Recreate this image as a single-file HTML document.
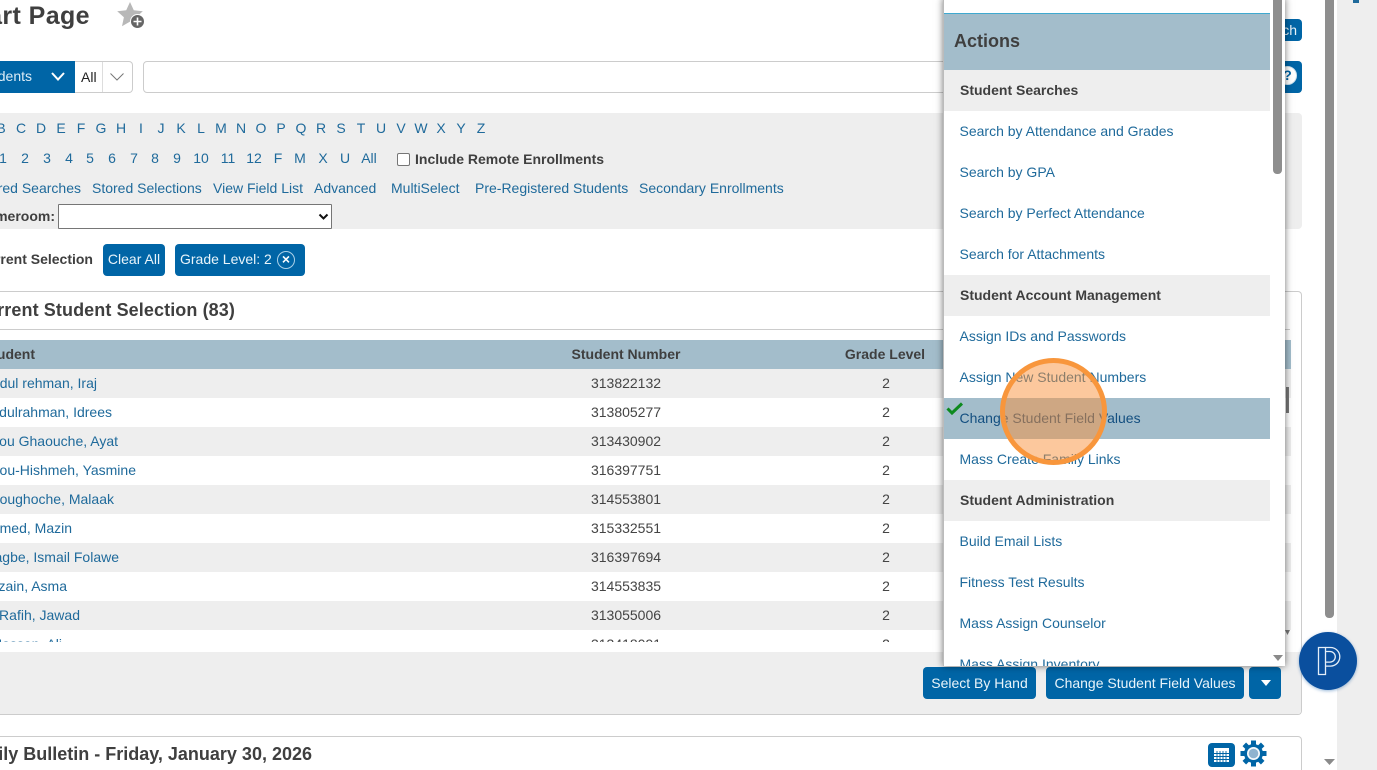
<!DOCTYPE html>
<html><head><meta charset="utf-8"><style>
html,body{margin:0;padding:0;background:#fff;width:1377px;height:770px;overflow:hidden}
body{position:relative;font-family:"Liberation Sans",sans-serif;font-size:14px;color:#1f6a9b}
.a{position:absolute;white-space:nowrap}
.t{position:absolute;white-space:nowrap;line-height:20px}
.c{position:absolute;white-space:nowrap;line-height:20px;text-align:center;transform:translateX(-50%)}
.b{font-weight:bold;color:#3f3f3f}
.btn{position:absolute;background:#0065a6;color:#e8f4fa;border-radius:4px;text-align:center;white-space:nowrap}
.row{position:absolute;left:0;width:1291px;height:29px}
.g{background:#eee}
.sec{position:absolute;left:1px;width:326px;height:41px;background:#eee;font-weight:bold;color:#3f3f3f;line-height:40px;padding-left:16px;box-sizing:border-box}
.it{position:absolute;left:15.500px;line-height:20px;white-space:nowrap}
</style></head><body>

<div class="t b" style="right:1287px;top:1px;font-size:25px;line-height:30px;letter-spacing:.4px">Start Page</div>
<svg class="a" style="left:116px;top:0" width="32" height="30" viewBox="0 0 32 30"><path d="M14 2l3.800 8.200 9 1-6.700 6 1.900 9-8-4.600-8 4.600 1.900-9L1.200 11.200l9-1z" fill="#b8b8b8"/><circle cx="21.500" cy="21.500" r="7.500" fill="#fff"/><circle cx="21.500" cy="21.500" r="6.500" fill="#666"/><path d="M21.500 17.500v8M17.500 21.500h8" stroke="#fff" stroke-width="1.600"/></svg>

<div class="a" style="left:0;top:61px;width:75px;height:32px;background:#0065a6"></div>
<div class="t" style="right:1345px;top:66px;color:#dcecf6">Students</div>
<svg class="a" style="left:50px;top:72px" width="16" height="10"><path d="M2 1l6 6.500L14 1" fill="none" stroke="#fff" stroke-width="2"/></svg>
<div class="a" style="left:75px;top:61px;width:57px;height:30px;border:1px solid #ccc;border-left:0;border-radius:0 4px 4px 0"></div>
<div class="a" style="left:102px;top:62px;width:1px;height:30px;background:#ddd"></div>
<div class="t" style="left:81px;top:67px;color:#222">All</div>
<svg class="a" style="left:109px;top:72px" width="16" height="10"><path d="M1.500 1.500l6.500 6.500 6.500-6.500" fill="none" stroke="#777" stroke-width="1"/></svg>
<div class="a" style="left:143px;top:61px;width:1130px;height:30px;border:1px solid #ccc;border-radius:4px"></div>

<div class="btn" style="left:1270px;top:19px;width:32px;height:22px;line-height:22px;text-align:right;padding-right:5px;box-sizing:border-box">ch</div>
<div class="btn" style="left:1270px;top:61px;width:32px;height:32px"></div>
<div class="a" style="left:1278px;top:66px;width:17px;height:17px;border:1.500px solid #cfe3ef;border-radius:50%;background:#fff;color:#0065a6;font-weight:bold;line-height:17px;text-align:center;font-size:14px">?</div>

<div class="a" style="left:0;top:113px;width:1302px;height:116px;background:#eee;border-radius:0 4px 4px 0"></div>
<div class="c" style="left:1px;top:118px">B</div><div class="c" style="left:21px;top:118px">C</div><div class="c" style="left:41px;top:118px">D</div><div class="c" style="left:61px;top:118px">E</div><div class="c" style="left:81px;top:118px">F</div><div class="c" style="left:101px;top:118px">G</div><div class="c" style="left:121px;top:118px">H</div><div class="c" style="left:141px;top:118px">I</div><div class="c" style="left:161px;top:118px">J</div><div class="c" style="left:181px;top:118px">K</div><div class="c" style="left:201px;top:118px">L</div><div class="c" style="left:221px;top:118px">M</div><div class="c" style="left:241px;top:118px">N</div><div class="c" style="left:261px;top:118px">O</div><div class="c" style="left:281px;top:118px">P</div><div class="c" style="left:301px;top:118px">Q</div><div class="c" style="left:321px;top:118px">R</div><div class="c" style="left:341px;top:118px">S</div><div class="c" style="left:361px;top:118px">T</div><div class="c" style="left:381px;top:118px">U</div><div class="c" style="left:401px;top:118px">V</div><div class="c" style="left:421px;top:118px">W</div><div class="c" style="left:441px;top:118px">X</div><div class="c" style="left:461px;top:118px">Y</div><div class="c" style="left:481px;top:118px">Z</div>

<div class="c" style="left:3px;top:148px">1</div><div class="c" style="left:25px;top:148px">2</div><div class="c" style="left:47px;top:148px">3</div><div class="c" style="left:69px;top:148px">4</div><div class="c" style="left:90px;top:148px">5</div><div class="c" style="left:112px;top:148px">6</div><div class="c" style="left:134px;top:148px">7</div><div class="c" style="left:155px;top:148px">8</div><div class="c" style="left:177px;top:148px">9</div><div class="c" style="left:201px;top:148px">10</div><div class="c" style="left:228px;top:148px">11</div><div class="c" style="left:254px;top:148px">12</div><div class="c" style="left:278px;top:148px">F</div><div class="c" style="left:300px;top:148px">M</div><div class="c" style="left:323px;top:148px">X</div><div class="c" style="left:345px;top:148px">U</div><div class="c" style="left:369px;top:148px">All</div>
<div class="a" style="left:397px;top:153px;width:11px;height:11px;border:1px solid #767676;border-radius:2px;background:#fff"></div>
<div class="t b" style="left:415px;top:149px">Include Remote Enrollments</div>

<div class="t" style="right:1296px;top:178px">Stored Searches</div>
<div class="t" style="left:92px;top:178px">Stored Selections</div>
<div class="t" style="left:213px;top:178px">View Field List</div>
<div class="t" style="left:314px;top:178px">Advanced</div>
<div class="t" style="left:391px;top:178px">MultiSelect</div>
<div class="t" style="left:475px;top:178px">Pre-Registered Students</div>
<div class="t" style="left:639px;top:178px">Secondary Enrollments</div>
<div class="t b" style="right:1322px;top:206px">Homeroom:</div>
<div class="a" style="left:58px;top:204px;width:272px;height:23px;border:1px solid #767676;background:#fff;border-radius:1px"></div>
<svg class="a" style="left:318px;top:213px" width="11" height="8"><path d="M1.500 1.500L5.500 5.500 9.500 1.500" fill="none" stroke="#111" stroke-width="2"/></svg>

<div class="t b" style="right:1284px;top:249px">Current Selection</div>
<div class="btn" style="left:103px;top:244px;width:62px;height:32px;line-height:30px">Clear All</div>
<div class="btn" style="left:175px;top:244px;width:130px;height:32px;line-height:30px;text-align:left;padding-left:5px;box-sizing:border-box">Grade Level: 2</div>
<div class="a" style="left:277px;top:251px;width:16px;height:16px;border:1px solid #a9d0e8;border-radius:50%;color:#fff;font-weight:bold;font-size:14px;line-height:15px;text-align:center">×</div>

<div class="a" style="left:0;top:291px;width:1301px;height:422px;border:1px solid #ccc;border-left:0;border-radius:0 4px 4px 0;background:#fff"></div>
<div class="t b" style="right:1142px;top:299px;font-size:18px;line-height:22px;letter-spacing:.1px">Current Student Selection (83)</div>
<div class="a" style="left:0;top:329px;width:1290px;height:1px;background:#ccc"></div>

<div class="a" style="left:0;top:340px;width:1291px;height:29px;background:#a3bdcb"></div>
<div class="t b" style="right:1342px;top:344px">Student</div>
<div class="c b" style="left:626px;top:344px">Student Number</div>
<div class="c b" style="left:885px;top:344px">Grade Level</div>

<div class="row g" style="top:369px"></div><div class="row" style="top:398px"></div><div class="row g" style="top:427px"></div><div class="row" style="top:456px"></div><div class="row g" style="top:485px"></div><div class="row" style="top:514px"></div><div class="row g" style="top:543px"></div><div class="row" style="top:572px"></div><div class="row g" style="top:601px"></div>

<div class="t" style="right:1280px;top:373px">Abdul rehman, Iraj</div><div class="c" style="left:626px;top:373px;color:#444">313822132</div><div class="c" style="left:886px;top:373px;color:#444">2</div>
<div class="t" style="right:1265px;top:402px">Abdulrahman, Idrees</div><div class="c" style="left:626px;top:402px;color:#444">313805277</div><div class="c" style="left:886px;top:402px;color:#444">2</div>
<div class="t" style="right:1259px;top:431px">Abou Ghaouche, Ayat</div><div class="c" style="left:626px;top:431px;color:#444">313430902</div><div class="c" style="left:886px;top:431px;color:#444">2</div>
<div class="t" style="right:1241px;top:460px">Abou-Hishmeh, Yasmine</div><div class="c" style="left:626px;top:460px;color:#444">316397751</div><div class="c" style="left:886px;top:460px;color:#444">2</div>
<div class="t" style="right:1263px;top:489px">Aboughoche, Malaak</div><div class="c" style="left:626px;top:489px;color:#444">314553801</div><div class="c" style="left:886px;top:489px;color:#444">2</div>
<div class="t" style="right:1305px;top:518px">Ahmed, Mazin</div><div class="c" style="left:626px;top:518px;color:#444">315332551</div><div class="c" style="left:886px;top:518px;color:#444">2</div>
<div class="t" style="right:1258px;top:547px">Alagbe, Ismail Folawe</div><div class="c" style="left:626px;top:547px;color:#444">316397694</div><div class="c" style="left:886px;top:547px;color:#444">2</div>
<div class="t" style="right:1310px;top:576px">Alzain, Asma</div><div class="c" style="left:626px;top:576px;color:#444">314553835</div><div class="c" style="left:886px;top:576px;color:#444">2</div>
<div class="t" style="right:1297px;top:605px">Al Rafih, Jawad</div><div class="c" style="left:626px;top:605px;color:#444">313055006</div><div class="c" style="left:886px;top:605px;color:#444">2</div>
<div class="a" style="left:0;top:630px;width:1291px;height:12px;overflow:hidden">
<div class="t" style="right:1229px;top:4px">Al Hassan, Ali</div><div class="c" style="left:626px;top:4px;color:#444">313418091</div><div class="c" style="left:886px;top:4px;color:#444">2</div></div>

<div class="a" style="left:0;top:652px;width:1301px;height:62px;background:#eee;border-radius:0 0 4px 0"></div>
<div class="btn" style="left:923px;top:667px;width:113px;height:32px;line-height:32px">Select By Hand</div>
<div class="btn" style="left:1046px;top:667px;width:198px;height:32px;line-height:32px">Change Student Field Values</div>
<div class="btn" style="left:1249px;top:667px;width:32px;height:32px"></div>
<svg class="a" style="left:1260px;top:679px" width="12" height="8"><path d="M1 1h10L6 7z" fill="#fff"/></svg>

<div class="a" style="left:0;top:736px;width:1301px;height:40px;border:1px solid #ccc;border-left:0;border-radius:0 4px 0 0"></div>
<div class="t b" style="right:1065px;top:743px;font-size:18px;line-height:22px">Daily Bulletin - Friday, January 30, 2026</div>
<svg class="a" style="left:1208px;top:743px" width="27" height="24"><rect width="27" height="24" rx="4" fill="#0065a6"/><rect x="6" y="5" width="15" height="14" fill="#fff"/><path d="M6 10.500h15M6 13.500h15M6 16.500h15M9 8v11M12 8v11M15 8v11M18 8v11" stroke="#0065a6" stroke-width=".9"/></svg>
<svg class="a" style="left:1240px;top:740px" width="27" height="27" viewBox="0 0 27 27"><g fill="#0065a6"><circle cx="13.500" cy="13.500" r="9.500"/><rect x="11" y=".5" width="5" height="26"/><rect x="11" y=".5" width="5" height="26" transform="rotate(45 13.500 13.500)"/><rect x="11" y=".5" width="5" height="26" transform="rotate(90 13.500 13.500)"/><rect x="11" y=".5" width="5" height="26" transform="rotate(135 13.500 13.500)"/></g><circle cx="13.500" cy="13.500" r="6.500" fill="#f4f8fb"/><circle cx="13.500" cy="13.500" r="4.800" fill="#8fb3cf"/></svg>

<div class="a" style="left:1286px;top:387px;width:2.500px;height:26px;background:#777"></div>
<div class="a" style="left:1285px;top:630px;width:5px;height:5px;background:#777;clip-path:polygon(0 0,100% 0,50% 100%)"></div>

<div class="a" style="left:943px;top:-2px;width:342px;height:668px;background:#fff;box-shadow:0 0 7px rgba(0,0,0,.55);overflow:hidden;border-left:1px solid #bbb;box-sizing:border-box">
  <div class="a" style="left:0;top:15px;width:326px;height:1px;background:#3fa9d0"></div>
  <div class="a b" style="left:0;top:16px;width:326px;height:56px;background:#a3bdcb;font-size:18px;line-height:54px;padding-left:10px;box-sizing:border-box">Actions</div>
  <div class="sec" style="left:0;top:72px">Student Searches</div>
  <div class="it" style="top:123px">Search by Attendance and Grades</div>
  <div class="it" style="top:164px">Search by GPA</div>
  <div class="it" style="top:205px">Search by Perfect Attendance</div>
  <div class="it" style="top:246px">Search for Attachments</div>
  <div class="sec" style="left:0;top:277px">Student Account Management</div>
  <div class="it" style="top:328px">Assign IDs and Passwords</div>
  <div class="it" style="top:369px">Assign New Student Numbers</div>
  <div class="a" style="left:0;top:400px;width:326px;height:41px;background:#a3bdcb"></div>
  <div class="it" style="top:410px;color:#134f80">Change Student Field Values</div>
  <svg class="a" style="left:2px;top:402px" width="18" height="16"><path d="M1.500 8.500L6 13 16 3.500" fill="none" stroke="#0d8a1f" stroke-width="3"/></svg>
  <div class="it" style="top:451px">Mass Create Family Links</div>
  <div class="sec" style="left:0;top:482px">Student Administration</div>
  <div class="it" style="top:533px">Build Email Lists</div>
  <div class="it" style="top:574px">Fitness Test Results</div>
  <div class="it" style="top:615px">Mass Assign Counselor</div>
  <div class="it" style="top:656px">Mass Assign Inventory</div>
  <div class="a" style="left:329px;top:0;width:9px;height:176px;background:#8e8e8e;border-radius:0 0 4px 4px"></div>
  <svg class="a" style="left:329px;top:656px" width="10" height="8"><path d="M0 1h10L5 7z" fill="#8a8a8a"/></svg>
</div>

<div class="a" style="left:1000px;top:358px;width:107px;height:107px;box-sizing:border-box;border:5px solid #f8963c;border-radius:50%;background:rgba(250,145,60,.5)"></div>

<div class="a" style="left:1325px;top:0;width:9px;height:618px;background:#8e8e8e;border-radius:0 0 4px 4px"></div>
<svg class="a" style="left:1324px;top:758px" width="11" height="8"><path d="M0 1h11L5.500 7z" fill="#8a8a8a"/></svg>
<div class="a" style="left:1337px;top:0;width:40px;height:770px;background:#eee"></div>
<div class="a" style="left:1353px;top:0;width:6px;height:3px;background:#1f6a9b"></div>

<div class="a" style="left:1299px;top:632px;width:58px;height:58px;border-radius:50%;background:#0a4f9e;box-shadow:0 1px 3px rgba(0,80,160,.4)"></div>
<svg class="a" style="left:1316px;top:645px" width="27" height="32" viewBox="0 0 27 32"><g fill="none" stroke="#e4eef8" stroke-width="1.300"><path d="M2.500 2.500V29.500H9.500V2.500z"/><path d="M9.500 2.500h5a9.300 9.300 0 0 1 0 18.600h-5"/><path d="M9.500 6.500h4.500a5.300 5.300 0 0 1 0 10.600h-4.500"/></g></svg>

</body></html>
